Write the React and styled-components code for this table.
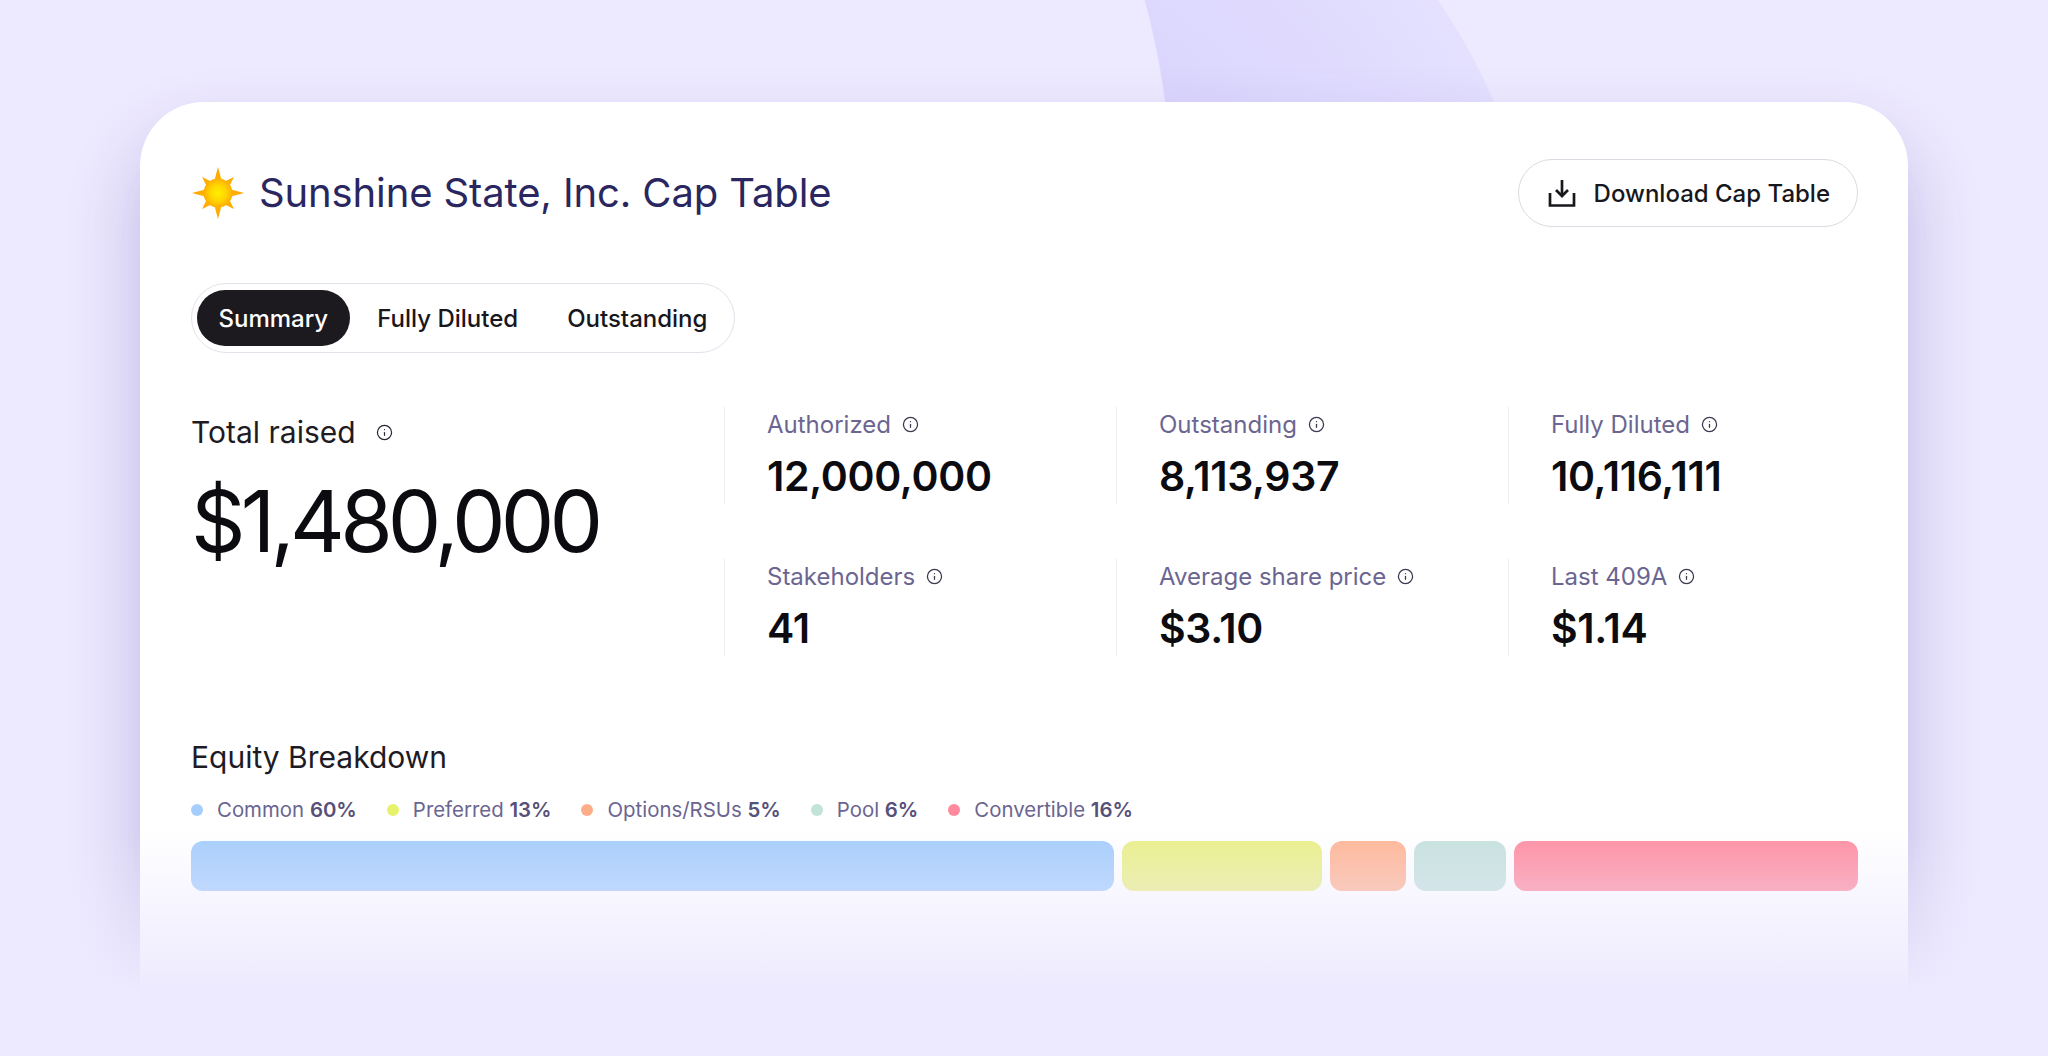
import React from 'react';
import styled, { createGlobalStyle } from 'styled-components';
import { Info } from 'lucide-react';

const GlobalStyle = createGlobalStyle`
  * { box-sizing: border-box; }
  html, body { margin: 0; padding: 0; }
  body {
    font-family: Inter, "Noto Sans", sans-serif;
    background-color: #EDE9FE;
    -webkit-font-smoothing: antialiased;
  }
`;

const Page = styled.div`
  position: relative;
  height: 1056px;
  overflow: hidden;
  padding: 102px 140px 0;
  background-color: #EDE9FE;
  background-image:
    radial-gradient(circle 800px at 373px 208px, #EDE9FE 99.8%, rgba(237, 233, 254, 0) 100%),
    radial-gradient(circle 600px at 944px 340px, #CFC8FC 0%, #E4E0FE 99.8%, rgba(228, 224, 254, 0) 100%);
  background-repeat: no-repeat;
`;

const Card = styled.section`
  background: #ffffff;
  border-radius: 64px 64px 0 0;
  min-height: 1000px;
  padding: 57px 50px 0 51px;
  box-shadow: 0 40px 70px rgba(70, 55, 160, 0.28);
`;

const Fade = styled.div`
  position: absolute;
  left: 0;
  right: 0;
  top: 830px;
  bottom: 0;
  pointer-events: none;
  background: linear-gradient(to bottom, rgba(237, 233, 254, 0) 0px, #EDE9FE 165px);
`;

const Header = styled.header`
  display: flex;
  align-items: center;
  justify-content: space-between;
  height: 68px;
`;

const TitleGroup = styled.div`
  display: flex;
  align-items: center;
  gap: 14px;
`;

const Title = styled.h1`
  margin: 0;
  font-size: 40px;
  font-weight: 400;
  line-height: 1;
  color: #2A2660;
  letter-spacing: -0.003em;
`;

const DownloadButton = styled.button`
  display: flex;
  align-items: center;
  gap: 18px;
  height: 68px;
  padding: 0 27px 0 29px;
  border: 1.5px solid #DCDAE2;
  border-radius: 999px;
  background: #ffffff;
  font-family: inherit;
  font-size: 24px;
  font-weight: 500;
  color: #18171C;
  cursor: pointer;
`;

const Tabs = styled.div`
  display: inline-flex;
  align-items: center;
  gap: 5px;
  margin-top: 56px;
  height: 70px;
  padding: 0 4.5px;
  border: 1.5px solid #E3E1EA;
  border-radius: 999px;
`;

const Tab = styled.button`
  height: 56px;
  padding: 0 22px;
  border: 0;
  border-radius: 999px;
  background: ${(p) => (p.$active ? '#1C1A1F' : 'transparent')};
  color: ${(p) => (p.$active ? '#ffffff' : '#18171C')};
  font-family: inherit;
  font-size: 24px;
  font-weight: 500;
  cursor: pointer;
`;

const Stats = styled.div`
  display: grid;
  grid-template-columns: 1fr repeat(3, 350px);
  column-gap: 42px;
  row-gap: 55px;
  margin-top: 54px;
`;

const TotalCell = styled.div`
  grid-row: span 2;
  padding-top: 7px;
`;

const TotalLabel = styled.div`
  display: flex;
  align-items: center;
  gap: 20px;
  font-size: 30px;
  line-height: 36px;
  color: #1E1B24;
`;

const BigValue = styled.div`
  margin-top: 29px;
  font-size: 85px;
  line-height: 85px;
  font-weight: 400;
  letter-spacing: -0.057em;
  color: #0C0B10;
`;

const StatCell = styled.div`
  border-left: 1.5px solid #EEECF2;
  padding: 3px 0 4px 42px;
`;

const StatLabel = styled.div`
  display: flex;
  align-items: center;
  gap: 11px;
  font-size: 24px;
  line-height: 29px;
  color: #6B6591;
`;

const StatValue = styled.div`
  margin-top: 13px;
  font-size: 41px;
  line-height: 48px;
  font-weight: 600;
  letter-spacing: -0.008em;
  color: #0C0B10;
`;

const InfoIcon = styled(Info)`
  flex: none;
  color: ${(p) => p.$tone || '#3D3950'};
`;

const Equity = styled.div`
  margin-top: 84px;
`;

const EquityTitle = styled.h2`
  margin: 0;
  font-size: 30px;
  line-height: 34px;
  font-weight: 400;
  color: #1E1B24;
`;

const Legend = styled.div`
  display: flex;
  align-items: center;
  gap: 30px;
  margin-top: 24px;
`;

const LegendItem = styled.div`
  display: flex;
  align-items: center;
  gap: 14px;
  font-size: 20.4px;
  line-height: 24px;
  color: #6B6591;

  b {
    font-weight: 600;
    color: #57517A;
  }
`;

const Dot = styled.span`
  width: 12px;
  height: 12px;
  border-radius: 50%;
  background: ${(p) => p.$color};
`;

const Bars = styled.div`
  display: flex;
  gap: 8px;
  height: 50px;
  margin-top: 19px;
`;

const Bar = styled.div`
  flex: ${(p) => p.$grow} 1 0;
  border-radius: 12px;
  background: ${(p) => p.$color};
`;

const SunIcon = () => {
  const pts = [];
  for (let i = 0; i < 16; i++) {
    const a = (Math.PI / 8) * i - Math.PI / 2;
    const r = i % 2 === 0 ? (i % 4 === 0 ? 26 : 22.5) : 11;
    pts.push(`${(27 + r * Math.cos(a)).toFixed(2)},${(27 + r * Math.sin(a)).toFixed(2)}`);
  }
  return (
    <svg width="54" height="54" viewBox="0 0 54 54" aria-hidden="true">
      <defs>
        <radialGradient id="sunRays" cx="50%" cy="50%" r="50%">
          <stop offset="0%" stopColor="#FFC400" />
          <stop offset="100%" stopColor="#FFA200" />
        </radialGradient>
        <radialGradient id="sunBody" cx="50%" cy="50%" r="50%">
          <stop offset="0%" stopColor="#FFEF00" />
          <stop offset="55%" stopColor="#FFD600" />
          <stop offset="100%" stopColor="#FFAE00" />
        </radialGradient>
      </defs>
      <polygon points={pts.join(' ')} fill="url(#sunRays)" />
      <circle cx="27" cy="27" r="14.5" fill="url(#sunBody)" />
    </svg>
  );
};

const DownloadIcon = () => (
  <svg width="28" height="28" viewBox="0 0 28 28" fill="none" stroke="#18171C" strokeWidth="2.7" aria-hidden="true">
    <path d="M14 1v16" />
    <path d="M8 11l6 6 6-6" />
    <path d="M2 14v12.5h24V14" />
  </svg>
);

const stats = [
  { label: 'Authorized', value: '12,000,000' },
  { label: 'Outstanding', value: '8,113,937' },
  { label: 'Fully Diluted', value: '10,116,111' },
  { label: 'Stakeholders', value: '41' },
  { label: 'Average share price', value: '$3.10' },
  { label: 'Last 409A', value: '$1.14' },
];

const equity = [
  { name: 'Common', pct: '60%', color: '#A6CEFC', dot: '#A6CEFC', grow: 924 },
  { name: 'Preferred', pct: '13%', color: '#EAF08A', dot: '#E6F26A', grow: 200 },
  { name: 'Options/RSUs', pct: '5%', color: '#FFB797', dot: '#FFAD88', grow: 76 },
  { name: 'Pool', pct: '6%', color: '#C6E2DD', dot: '#C2E3DA', grow: 92 },
  { name: 'Convertible', pct: '16%', color: '#FF8FA2', dot: '#FF8A9D', grow: 344 },
];

export default function App() {
  return (
    <>
      <GlobalStyle />
      <Page>
        <Card>
          <Header>
            <TitleGroup>
              <SunIcon />
              <Title>Sunshine State, Inc. Cap Table</Title>
            </TitleGroup>
            <DownloadButton>
              <DownloadIcon />
              Download Cap Table
            </DownloadButton>
          </Header>

          <Tabs>
            <Tab $active>Summary</Tab>
            <Tab>Fully Diluted</Tab>
            <Tab>Outstanding</Tab>
          </Tabs>

          <Stats>
            <TotalCell>
              <TotalLabel>
                Total raised
                <InfoIcon size={17} strokeWidth={1.7} $tone="#2A2733" />
              </TotalLabel>
              <BigValue>$1,480,000</BigValue>
            </TotalCell>
            {stats.map((s) => (
              <StatCell key={s.label}>
                <StatLabel>
                  {s.label}
                  <InfoIcon size={17} strokeWidth={1.8} />
                </StatLabel>
                <StatValue>{s.value}</StatValue>
              </StatCell>
            ))}
          </Stats>

          <Equity>
            <EquityTitle>Equity Breakdown</EquityTitle>
            <Legend>
              {equity.map((e) => (
                <LegendItem key={e.name}>
                  <Dot $color={e.dot} />
                  <span>
                    {e.name} <b>{e.pct}</b>
                  </span>
                </LegendItem>
              ))}
            </Legend>
            <Bars>
              {equity.map((e) => (
                <Bar key={e.name} $grow={e.grow} $color={e.color} />
              ))}
            </Bars>
          </Equity>
        </Card>
        <Fade />
      </Page>
    </>
  );
}
